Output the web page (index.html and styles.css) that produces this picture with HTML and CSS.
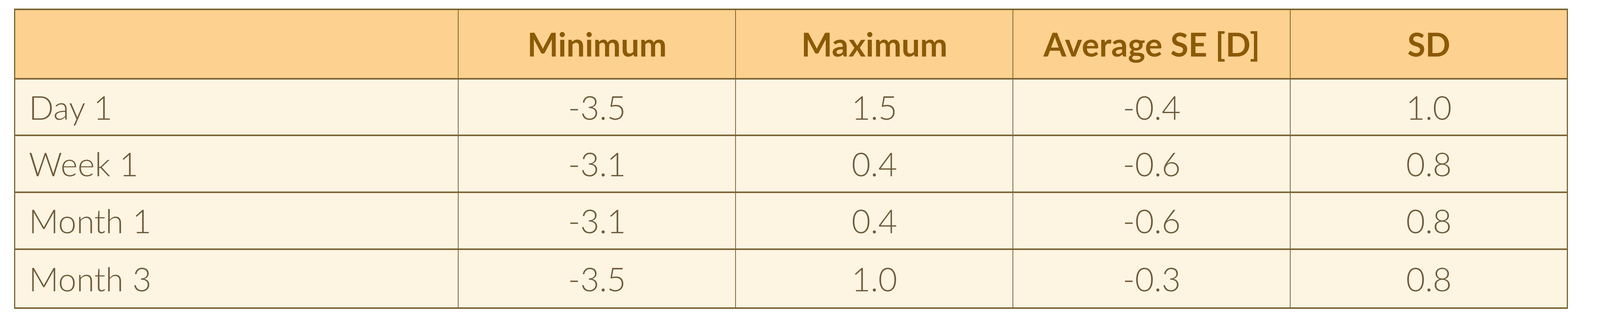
FILE: index.html
```html
<!DOCTYPE html>
<html>
<head>
<meta charset="utf-8">
<link rel="stylesheet" href="styles.css">
</head>
<body>
<div class="page">
  <table class="data">
    <colgroup>
      <col class="c-label">
      <col class="c-val">
      <col class="c-val">
      <col class="c-val">
      <col class="c-val">
    </colgroup>
    <thead>
      <tr class="head">
        <th class="label"></th>
        <th>Minimum</th>
        <th>Maximum</th>
        <th>Average SE [D]</th>
        <th>SD</th>
      </tr>
    </thead>
    <tbody>
      <tr class="r1"><td class="label">Day 1</td><td>-3.5</td><td>1.5</td><td>-0.4</td><td>1.0</td></tr>
      <tr class="r2"><td class="label">Week 1</td><td>-3.1</td><td>0.4</td><td>-0.6</td><td>0.8</td></tr>
      <tr class="r3"><td class="label">Month 1</td><td>-3.1</td><td>0.4</td><td>-0.6</td><td>0.8</td></tr>
      <tr class="r4"><td class="label">Month 3</td><td>-3.5</td><td>1.0</td><td>-0.3</td><td>0.8</td></tr>
    </tbody>
  </table>
</div>
</body>
</html>
```

FILE: styles.css
```css
html, body {
  margin: 0;
  padding: 0;
  background: #ffffff;
}

.page {
  padding: 22px 0 0 0.87vw;
}

.data {
  border-collapse: separate;
  border-spacing: 0;
  width: 97.14vw;
  table-layout: fixed;
  font-family: Lato, "Liberation Sans", sans-serif;
  border-top: 4px solid #7a6535;
  border-left: 3px solid #7a6535;
}

.c-label { width: 28.57%; }
.c-val { width: 17.86%; }

.data th,
.data td {
  padding: 0;
  text-align: center;
  vertical-align: middle;
  border-bottom: 4px solid #7a6535;
  border-right: 2px solid #7a6535;
  white-space: nowrap;
}

.data th:last-child,
.data td:last-child {
  border-right-width: 3px;
}

.data .label {
  text-align: left;
  padding-left: 0.86vw;
}

.head th {
  background: #fdd18f;
  color: #8b5a06;
  font-weight: 700;
  font-size: 84px;
  height: 174px;
  line-height: 1;
}

.data td {
  background: #fef4e2;
  color: #6e5a3a;
  font-weight: 300;
  font-size: 84px;
  line-height: 1;
}

.r1 td { height: 141px; }
.r2 td { height: 142px; }
.r3 td { height: 142px; }
.r4 td { height: 147px; }
```
